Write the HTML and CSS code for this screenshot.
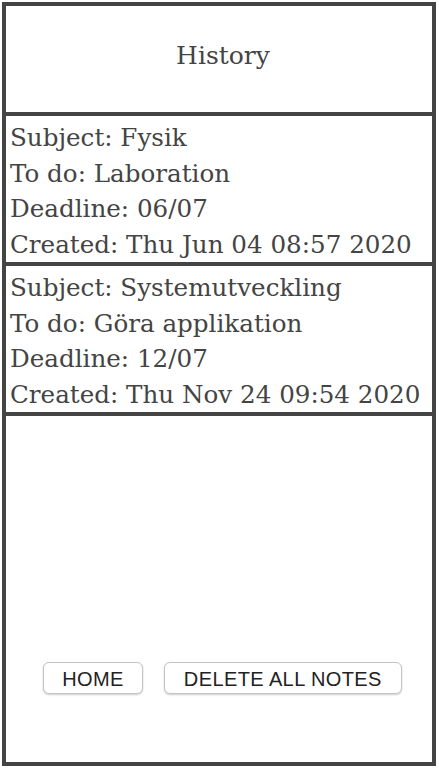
FILE: index.html
```html
<!DOCTYPE html>
<html>
<head>
<meta charset="utf-8">
<link rel="stylesheet" href="styles.css">
</head>
<body>
<div class="frame">
  <header class="header">History</header>
  <div class="note">
    <div>Subject: Fysik</div>
    <div>To do: Laboration</div>
    <div>Deadline: 06/07</div>
    <div>Created: Thu Jun 04 08:57 2020</div>
  </div>
  <div class="note">
    <div>Subject: Systemutveckling</div>
    <div>To do: Göra applikation</div>
    <div>Deadline: 12/07</div>
    <div>Created: Thu Nov 24 09:54 2020</div>
  </div>
  <div class="spacer"></div>
  <div class="actions">
    <button class="btn btn-home">HOME</button>
    <button class="btn btn-delete">DELETE ALL NOTES</button>
  </div>
</div>
</body>
</html>
```
FILE: styles.css
```css
html, body {
  margin: 0;
  padding: 0;
  background: #fff;
}
body {
  padding: 2px;
  height: 768px;
  box-sizing: border-box;
}
.frame {
  box-sizing: border-box;
  width: 434px;
  height: 764px;
  border: 4px solid #444;
  display: flex;
  flex-direction: column;
  font-family: "DejaVu Serif", Georgia, serif;
  color: #444;
}
.header {
  height: 110px;
  display: flex;
  align-items: center;
  justify-content: center;
  font-size: 25px;
  border-bottom: 4px solid #444;
  padding-bottom: 8px;
  padding-left: 8px;
  box-sizing: border-box;
}
.note {
  border-bottom: 4px solid #444;
  padding: 4px 0 0 4px;
  font-size: 24.6px;
  line-height: 35.5px;
  height: 150px;
  box-sizing: border-box;
  white-space: nowrap;
}
.spacer {
  flex: 1;
}
.actions {
  display: flex;
  justify-content: center;
  gap: 21px;
  padding-left: 7px;
  margin-bottom: 68px;
}
.btn {
  font-family: "Liberation Sans", Arial, sans-serif;
  font-size: 20px;
  color: #222;
  background: #fff;
  border: 1px solid #c4c4c4;
  border-radius: 6px;
  box-shadow: 0 1px 2px rgba(0,0,0,0.2);
  height: 32px;
  padding-top: 3px;
  letter-spacing: 0.4px;
}
.btn-home {
  padding-left: 18px;
  padding-right: 18px;
}
.btn-delete {
  padding-left: 19px;
  padding-right: 19px;
}
```
